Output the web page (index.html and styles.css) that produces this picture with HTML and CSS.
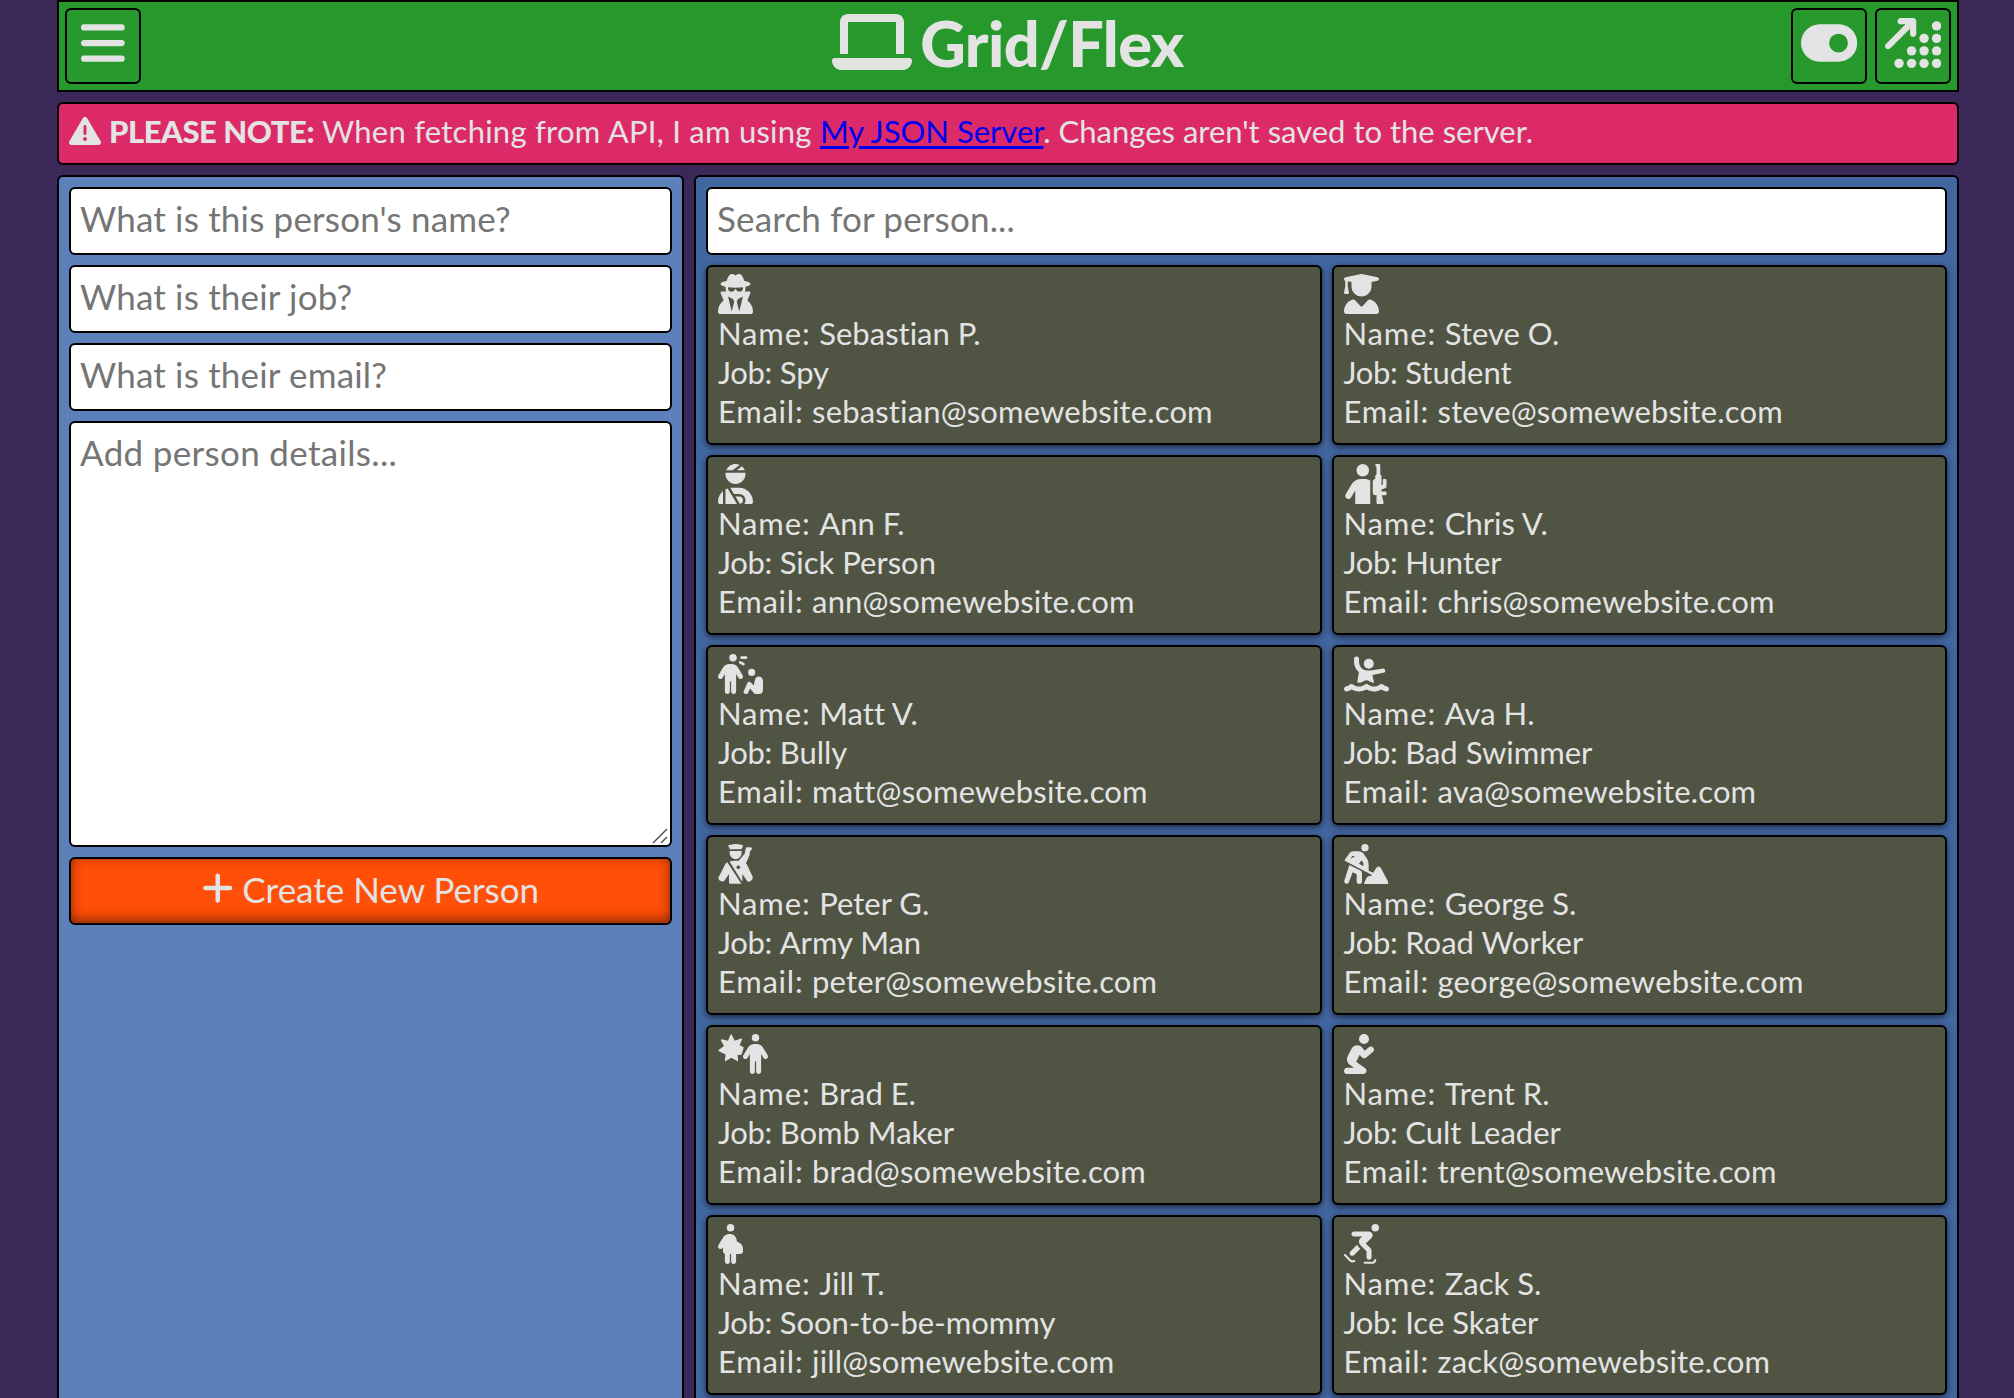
FILE: index.html
```html
<!DOCTYPE html>
<html lang="en">
<head>
<meta charset="utf-8">
<title>Grid/Flex</title>
<link rel="stylesheet" href="styles.css">
</head>
<body>
<div class="page">
  <header class="topbar">
    <button class="square" aria-label="Menu"><svg class="icon-lg" viewBox="0 0 448 512"><path d="M32 224H416a32 32 0 0 1 0 64H32a32 32 0 0 1 0-64zM32 384H416a32 32 0 0 1 0 64H32a32 32 0 0 1 0-64zM32 64H416a32 32 0 0 1 0 64H32a32 32 0 0 1 0-64z"/></svg></button>
    <h1 class="title"><svg class="icon-xl" viewBox="0 0 640 512"><path d="M128 32C92.7 32 64 60.7 64 96V352h64V96H512V352h64V96c0-35.3-28.7-64-64-64H128zM19.2 384C8.6 384 0 392.6 0 403.2C0 445.6 34.4 480 76.8 480H563.2c42.4 0 76.8-34.4 76.8-76.8c0-10.6-8.6-19.2-19.2-19.2H19.2z"/></svg><span>Grid/Flex</span></h1>
    <div class="actions">
      <button class="square" aria-label="Toggle theme"><svg class="icon-lg" viewBox="0 0 576 512"><path d="M192 64C86 64 0 150 0 256S86 448 192 448H384c106 0 192-86 192-192s-86-192-192-192H192zm192 96a96 96 0 1 1 0 192 96 96 0 1 1 0-192z"/></svg></button>
      <button class="square" aria-label="Sort"><svg class="icon-lg" viewBox="0 0 576 512"><path d="M160 0c-17.7 0-32 14.3-32 32s14.3 32 32 32h50.7L9.4 265.4c-12.5 12.5-12.5 32.8 0 45.3s32.8 12.5 45.3 0L256 109.3V160c0 17.7 14.3 32 32 32s32-14.3 32-32V32c0-17.7-14.3-32-32-32H160z"/><circle cx="528" cy="80" r="48"/><circle cx="400" cy="208" r="48"/><circle cx="528" cy="208" r="48"/><circle cx="272" cy="336" r="48"/><circle cx="400" cy="336" r="48"/><circle cx="528" cy="336" r="48"/><circle cx="144" cy="464" r="48"/><circle cx="272" cy="464" r="48"/><circle cx="400" cy="464" r="48"/><circle cx="528" cy="464" r="48"/></svg></button>
    </div>
  </header>

  <p class="notice"><svg class="icon-sm" viewBox="0 0 512 512"><path d="M256 32c14.2 0 27.3 7.5 34.5 19.8l216 368c7.3 12.4 7.3 27.7 .2 40.1S486.3 480 472 480H40c-14.3 0-27.6-7.7-34.7-20.1s-7-27.8 .2-40.1l216-368C228.7 39.5 241.8 32 256 32zm0 128c-13.3 0-24 10.7-24 24V296c0 13.3 10.7 24 24 24s24-10.7 24-24V184c0-13.3-10.7-24-24-24zm32 224a32 32 0 1 0 -64 0 32 32 0 1 0 64 0z"/></svg><strong>PLEASE NOTE:</strong><span><span class="wide">When fetching from API, I am using </span><a href="#">My JSON Server</a>. Changes aren't saved to the server.</span></p>

  <main class="columns">
    <form class="panel form">
      <input class="field" type="text" placeholder="What is this person's name?">
      <input class="field" type="text" placeholder="What is their job?">
      <input class="field" type="text" placeholder="What is their email?">
      <div class="details-wrap">
        <textarea class="field details" placeholder="Add person details..."></textarea>
        <svg class="grip" viewBox="0 0 16 16"><path d="M1 15L15 1M9 15L15 9"/></svg>
      </div>
      <button class="create" type="button"><svg class="icon-md" viewBox="0 0 448 512"><path d="M256 80c0-17.7-14.3-32-32-32s-32 14.3-32 32V224H48c-17.7 0-32 14.3-32 32s14.3 32 32 32H192V432c0 17.7 14.3 32 32 32s32-14.3 32-32V288H400c17.7 0 32-14.3 32-32s-14.3-32-32-32H256V80z"/></svg><span>Create New Person</span></button>
    </form>

    <section class="panel people">
      <input class="field search" type="text" placeholder="Search for person...">
      <div class="cards">
        <article class="card">
          <svg viewBox="0 0 448 512"><path d="M224 16c-6.7 0-10.8-2.8-15.5-6.1C201.9 5.4 194 0 176 0c-30.5 0-52 43.7-66 89.4C62.7 98.1 32 112.2 32 128c0 14.3 25 27.1 64.6 35.9c-.4 4-.6 8-.6 12.1c0 17 3.3 33.2 9.3 48H45.4C38 224 32 230 32 237.4c0 1.7 .3 3.4 1 5l38.8 96.9C28.2 371.8 0 423.8 0 482.3C0 498.7 13.3 512 29.7 512H418.3c16.4 0 29.7-13.3 29.7-29.7c0-58.5-28.2-110.4-71.7-143L415 242.4c.6-1.6 1-3.3 1-5c0-7.4-6-13.4-13.4-13.4H342.7c6-14.8 9.3-31 9.3-48c0-4.1-.2-8.1-.6-12.1C391 155.1 416 142.3 416 128c0-15.8-30.7-29.9-78-38.6C324 43.7 302.5 0 272 0c-18 0-25.9 5.4-32.5 9.9c-4.8 3.3-8.8 6.1-15.5 6.1zm56 208H267.6c-16.5 0-31.1-10.6-36.3-26.2c-2.3-7-12.2-7-14.5 0c-5.2 15.6-19.9 26.2-36.3 26.2H168c-22.1 0-40-17.9-40-40V169.6c28.2 4.1 61 6.4 96 6.4s67.8-2.3 96-6.4V184c0 22.1-17.9 40-40 40zm-88 96l16 32L176 480 128 288l64 32zm128-32L272 480 240 352l16-32 64-32z"/></svg>
          <p><span class="key-name">Name: </span>Sebastian P.</p><p><span class="key-job">Job: </span>Spy</p><p class="email"><span class="key-email">Email: </span>sebastian@somewebsite.com</p>
        </article>
        <article class="card">
          <svg viewBox="0 0 448 512"><path d="M219.3 .5c3.1-.6 6.3-.6 9.4 0l200 40C439.9 42.7 448 52.6 448 64s-8.1 21.3-19.3 23.5L352 102.9V160c0 70.7-57.3 128-128 128s-128-57.3-128-128V102.9L48 93.3v65.1l15.7 78.4c.9 4.7-.3 9.6-3.3 13.3s-7.6 5.9-12.4 5.9H16c-4.8 0-9.3-2.1-12.4-5.9s-4.3-8.6-3.3-13.3L16 158.4V86.6C6.5 83.3 0 74.3 0 64C0 52.6 8.1 42.7 19.3 40.5l200-40zM111.9 327.7c10.5-3.4 21.8 .4 29.4 8.5l71 75.5c6.3 6.7 17 6.7 23.3 0l71-75.5c7.6-8.1 18.9-11.9 29.4-8.5C401 348.6 448 409.4 448 481.3c0 17-13.8 30.7-30.7 30.7H30.7C13.8 512 0 498.2 0 481.3c0-71.9 47-132.7 111.9-153.6z"/></svg>
          <p><span class="key-name">Name: </span>Steve O.</p><p><span class="key-job">Job: </span>Student</p><p class="email"><span class="key-email">Email: </span>steve@somewebsite.com</p>
        </article>
        <article class="card">
          <svg viewBox="0 0 448 512"><path d="M240 80H342.7c-7.9-19.5-20.4-36.5-36.2-49.9L240 80zm37.7-68.2C261.3 4.2 243.2 0 224 0c-53.7 0-99.7 33.1-118.7 80h81.4l91-68.2zM224 256c70.7 0 128-57.3 128-128c0-5.4-.3-10.8-1-16H97c-.7 5.2-1 10.6-1 16c0 70.7 57.3 128 128 128zM124 312.4c-9.7 3.1-19.1 7-28 11.7V512H243.7L181.5 408.1 124 312.4zm33-7.2L204.3 384H272c44.2 0 80 35.8 80 80c0 18-6 34.6-16 48h82.3c16.4 0 29.7-13.3 29.7-29.7C448 383.8 368.2 304 269.7 304H178.3c-7.2 0-14.3 .4-21.3 1.3zM0 482.3C0 498.7 13.3 512 29.7 512H64V345.4C24.9 378.1 0 427.3 0 482.3zM320 464c0-26.5-21.5-48-48-48H223.5l57.1 95.2C303 507.2 320 487.6 320 464z"/></svg>
          <p><span class="key-name">Name: </span>Ann F.</p><p><span class="key-job">Job: </span>Sick Person</p><p class="email"><span class="key-email">Email: </span>ann@somewebsite.com</p>
        </article>
        <article class="card">
          <svg viewBox="0 0 576 512"><path d="M265.2 192c25.4 0 49.8 7.1 70.8 19.9V512H144V337.7L90.4 428.3c-11.2 19-35.8 25.3-54.8 14.1s-25.3-35.8-14.1-54.8L97.7 258.8c24.5-41.4 69-66.8 117.1-66.8h50.4zM160 80a80 80 0 1 1 160 0A80 80 0 1 1 160 80zM448 0c8.8 0 16 7.2 16 16V132.3c9.6 5.5 16 15.9 16 27.7V269.3l16-5.3V208c0-8.8 7.2-16 16-16h16c8.8 0 16 7.2 16 16v84.500c0 6.9-4.4 13-10.9 15.2L480 325.3V352h48c8.8 0 16 7.2 16 16v16c0 8.8-7.2 16-16 16H484l23 92.1c2.5 10.1-5.1 19.9-15.5 19.9H432c-8.8 0-16-7.2-16-16V400H400c-17.7 0-32-14.3-32-32V224c0-17.7 14.3-32 32-32V160c0-11.8 6.400-22.2 16-27.7V32c-8.8 0-16-7.2-16-16s7.2-16 16-16h32z"/></svg>
          <p><span class="key-name">Name: </span>Chris V.</p><p><span class="key-job">Job: </span>Hunter</p><p class="email"><span class="key-email">Email: </span>chris@somewebsite.com</p>
        </article>
        <article class="card">
          <svg viewBox="0 0 576 512"><circle cx="192" cy="48" r="48"/><path d="M152 352V480c0 17.7-14.3 32-32 32s-32-14.3-32-32V256.9L59.4 304.5c-9.1 15.1-28.8 20-43.9 10.900s-20-28.8-10.9-43.9l58.3-97c17.4-28.9 48.6-46.6 82.3-46.6h29.7c33.700 0 64.9 17.700 82.300 46.600l58.300 97c9.100 15.100 4.200 34.800-10.900 43.900s-34.800 4.200-43.900-10.900L232 256.900V480c0 17.700-14.300 32-32 32s-32-14.300-32-32V352H152z"/><circle cx="431" cy="236" r="46"/><g class="line"><path stroke-width="34" d="M302 47H358M284 106L326 130"/><path stroke-width="60" d="M358 482L402 388L470 462"/></g><path d="M396 368L456 404C470 380 460 290 520 288C552 288 576 312 576 346V460C576 490 554 512 526 512H470L430 460Z"/></svg>
          <p><span class="key-name">Name: </span>Matt V.</p><p><span class="key-job">Job: </span>Bully</p><p class="email"><span class="key-email">Email: </span>matt@somewebsite.com</p>
        </article>
        <article class="card">
          <svg viewBox="0 0 576 512"><circle cx="317" cy="124" r="64"/><path d="M192 64a32 32 0 0 0-64 0V96C128 150 151 200 190 234L169 362C178 366 184 368 192 368C213 368 234 359 251 348C273 332 303 332 325 348C342 359 363 368 384 368L364 268L518 238A32 32 0 0 0 506 184L362 208C330 214 310 210 280 208C228 202 192 150 192 96Z"/><path transform="translate(0-32)" d="M269.500 421.900c11.100-7.900 25.900-7.900 37 0C329 437.400 356.500 448 384 448c26.900 0 55.300-10.800 77.400-26.100c11.900-8.500 28.100-7.800 39.200 1.700c14.400 11.900 32.500 21 50.600 25.200c17.200 4 27.900 21.200 23.900 38.400s-21.200 27.900-38.400 23.900c-24.500-5.700-44.900-16.500-58.200-25C449.500 501.700 417 512 384 512c-31.900 0-60.600-9.900-80.400-18.900c-5.800-2.700-11.100-5.300-15.600-7.700c-4.500 2.400-9.700 5.100-15.600 7.700c-19.800 9-48.500 18.900-80.400 18.900c-33 0-65.500-10.300-94.500-25.800c-13.400 8.400-33.700 19.300-58.200 25c-17.200 4-34.400-6.700-38.400-23.900s6.700-34.400 23.900-38.400c18.100-4.200 36.200-13.300 50.600-25.200c11.100-9.400 27.300-10.100 39.200-1.700C136.700 437.200 165.100 448 192 448c27.500 0 55-10.600 77.500-26.100z"/></svg>
          <p><span class="key-name">Name: </span>Ava H.</p><p><span class="key-job">Job: </span>Bad Swimmer</p><p class="email"><span class="key-email">Email: </span>ava@somewebsite.com</p>
        </article>
        <article class="card">
          <svg viewBox="0 0 105 120"><path d="M31 6Q30 4 33 3L50 0H56L73 3Q76 4 75 6L71 14V16H35V14ZM35 21H71V26C71 37 63 45 53 45S35 37 35 26ZM28 55L70 119H36Q33 119 33 116V90L19 110Q15 114 8 111T1 101L19 66Q22 58 28 55ZM36 52Q42 50 50 50H62L80 29L84 10L87 11L90 8L94 11L97 9L103 13L95 24V32L91 41L84 58Q87 61 89 66L104 98Q106 106 98 111T87 110L73 90V112L71 111L36 55Z"/><circle class="hole" cx="61" cy="70" r="5.500"/></svg>
          <p><span class="key-name">Name: </span>Peter G.</p><p><span class="key-job">Job: </span>Army Man</p><p class="email"><span class="key-email">Email: </span>peter@somewebsite.com</p>
        </article>
        <article class="card">
          <svg viewBox="0 0 134 120"><circle cx="63" cy="11" r="11"/><path fill-rule="evenodd" d="M2 48L15 29Q20 22 29 22H42Q54 22 61 32L70 46Q74 54 74 62V80L88 86L96 73Q104 62 111 73L133 114Q136 120 130 120H64Q58 120 62 113L68 101Q71 96 77 96H81L84 93L5 52Q1 50 2 48ZM20 45L33 36L26 36Q24 37 22 41ZM45 59L58 66V57L53 49Z"/><path d="M16 63L51 80Q54 82 54 87V112A7 7 0 0 1 38 112V91L26 85L15 114A7 7 0 0 1 1 110Z"/></svg>
          <p><span class="key-name">Name: </span>George S.</p><p><span class="key-job">Job: </span>Road Worker</p><p class="email"><span class="key-email">Email: </span>george@somewebsite.com</p>
        </article>
        <article class="card">
          <svg viewBox="0 0 640 512"><path transform="translate(320)" d="M112 48a48 48 0 1 1 96 0A48 48 0 1 1 112 48zm40 304V480c0 17.700-14.300 32-32 32s-32-14.300-32-32V256.900L59.400 304.500c-9.100 15.100-28.800 20-43.900 10.900s-20-28.800-10.900-43.900l58.300-97c17.400-28.900 48.600-46.600 82.300-46.600h29.700c33.700 0 64.900 17.700 82.300 46.600l58.300 97c9.100 15.100 4.200 34.800-10.900 43.900s-34.800 4.200-43.900-10.900L232 256.900V480c0 17.700-14.300 32-32 32s-32-14.300-32-32V352H152z"/><path d="M176 8L214 87L296 58Q312 56 306 72L278 140L330 174L300 266L250 270L258 340Q258 352 246 346L171 303L100 346Q86 352 88 338L98 262L12 220Q-2 210 12 202L76 154L38 82Q34 66 50 68L128 86L160 8Q168 0 176 8Z"/></svg>
          <p><span class="key-name">Name: </span>Brad E.</p><p><span class="key-job">Job: </span>Bomb Maker</p><p class="email"><span class="key-email">Email: </span>brad@somewebsite.com</p>
        </article>
        <article class="card">
          <svg viewBox="32 0 448 512"><path d="M352 64A64 64 0 1 0 224 64a64 64 0 1 0 128 0zM232.700 264l22.900 31.500c6.500 8.900 16.300 14.700 27.200 16.100s21.900-1.700 30.400-8.700l88-72c17.100-14 19.600-39.200 5.600-56.300s-39.200-19.600-56.300-5.600l-55.200 45.200-26.200-36C253.600 156.700 228.600 144 202 144c-30.900 0-59.200 17.100-73.600 44.400L79.800 280.900c-20.200 38.500-9.400 85.900 25.600 111.800L158.600 432H72c-22.100 0-40 17.900-40 40s17.900 40 40 40H280c17.300 0 32.600-11.100 38-27.500s-.3-34.400-14.200-44.700L187.700 354l45-90z"/></svg>
          <p><span class="key-name">Name: </span>Trent R.</p><p><span class="key-job">Job: </span>Cult Leader</p><p class="email"><span class="key-email">Email: </span>trent@somewebsite.com</p>
        </article>
        <article class="card">
          <svg viewBox="32 0 384 512"><circle cx="192" cy="48" r="48"/><path d="M120 383c-13.800-3.600-24-16.100-24-31V296.900l-4.600 7.600c-9.100 15.100-28.800 20-43.900 10.900s-20-28.800-10.900-43.900l58.300-97c15-24.900 40.300-41.500 68.700-45.600c4.100-.6 8.200-1 12.500-1h15.900c1.400 0 2.800 .1 4.100 .3c35.700 2.900 65.400 29.300 72.100 65l6.100 32.500c44.300 8.600 77.700 47.500 77.700 94.300v32c0 17.700-14.300 32-32 32H264v96c0 17.700-14.300 32-32 32s-32-14.300-32-32V384h-16v96c0 17.700-14.300 32-32 32s-32-14.300-32-32V383z"/></svg>
          <p><span class="key-name">Name: </span>Jill T.</p><p><span class="key-job">Job: </span>Soon-to-be-mommy</p><p class="email"><span class="key-email">Email: </span>jill@somewebsite.com</p>
        </article>
        <article class="card">
          <svg viewBox="0 0 448 512"><circle cx="400" cy="48" r="48"/><path d="M96 128c0-17.700 14.300-32 32-32H319.400c43.600 0 64.600 53.400 32.800 83.100l-74 69.300 60.200 60.200c9 9 14.100 21.200 14.100 33.900V424c0 17.700-14.300 32-32 32s-32-14.300-32-32V349.300l-77.900-77.800c-26.600-26.600-24.600-70.300 4.300-94.400l20.400-17H128c-17.700 0-32-14.300-32-32zM81.400 353.400l86.900-86.900c4.600 10 11 19.300 19.300 27.500l21.800 21.800-82.700 82.700c-12.500 12.500-32.800 12.500-45.300 0s-12.500-32.800 0-45.300z"/><path class="line" stroke-width="26" d="M12 396L76 464Q94 486 132 474M264 497H366Q396 494 400 462"/></svg>
          <p><span class="key-name">Name: </span>Zack S.</p><p><span class="key-job">Job: </span>Ice Skater</p><p class="email"><span class="key-email">Email: </span>zack@somewebsite.com</p>
        </article>
      </div>
    </section>
  </main>
</div>
</body>
</html>
```
FILE: styles.css
```css
* { box-sizing: border-box; margin: 0; }

html { height: 1398px; overflow: hidden; }

body {
  height: 1398px;
  overflow: hidden;
  background: #3b2858;
  color: #e3e3e3;
  font-family: Optima, Lato, sans-serif;
  font-size: 31px;
  font-variant-ligatures: none;
}

svg { fill: currentColor; display: block; flex: none; }

.page {
  width: 1902px;
  height: 1398px;
  margin-left: 57px;
  overflow: hidden;
  display: flex;
  flex-direction: column;
  gap: 10px;
}

.topbar {
  height: 92px;
  flex: none;
  padding: 6px;
  border: 2px solid #000;
  background: #27982c;
  display: grid;
  grid-template-columns: 1fr auto 1fr;
}

.square {
  width: 76px;
  height: 76px;
  padding: 0 0 6px;
  border: 2px solid #000;
  border-radius: 6px;
  background: none;
  color: inherit;
  display: flex;
  align-items: center;
  justify-content: center;
}

.icon-lg { height: 50px; }
.icon-xl { height: 64px; }
.icon-md { height: 36px; margin-bottom: 2px; }
.icon-sm { height: 32px; }

.title {
  display: flex;
  align-items: flex-start;
  gap: 8px;
  padding-top: 2px;
  font-size: 63px;
  font-weight: 900;
  line-height: 66px;
  letter-spacing: -.6px;
}

.actions { display: flex; justify-content: flex-end; gap: 8px; }

.notice {
  height: 63px;
  flex: none;
  padding: 0 10px 5px;
  border: 2px solid #000;
  border-radius: 6px;
  background: #dc2a69;
  display: flex;
  align-items: center;
  gap: 8px;
  white-space: nowrap;
}

.notice strong { font-weight: 900; letter-spacing: -.45px; }
.notice .wide { letter-spacing: .25px; }
.notice a { color: #00e; text-underline-offset: 3px; text-decoration-thickness: 3px; }

.columns {
  flex: 1;
  min-height: 0;
  display: grid;
  grid-template-columns: 627px 1265px;
  grid-template-rows: 100%;
  gap: 10px;
}

.panel {
  padding: 10px 10px 0;
  border: 2px solid #000;
  border-bottom: 0;
  border-radius: 6px 6px 0 0;
  display: flex;
  flex-direction: column;
  gap: 10px;
}

.form { background: #5c80ba; }
.people { background: #4266a0; }

.field {
  width: 100%;
  height: 68px;
  flex: none;
  padding: 0 9px 6px;
  border: 2px solid #000;
  border-radius: 6px;
  background: #fff;
  font: inherit;
  font-size: 35px;
  letter-spacing: .17px;
}

.field::placeholder { color: #757575; }
.details-wrap { position: relative; height: 426px; flex: none; }
.details { display: block; height: 426px; padding-top: 8px; resize: none; letter-spacing: .33px; }

.grip {
  position: absolute;
  right: 4px;
  bottom: 3px;
  width: 16px;
  height: 16px;
  fill: none;
  stroke: #555;
  stroke-width: 1.5;
}

.create {
  height: 68px;
  flex: none;
  padding: 0 0 4px;
  border: 2px solid #000;
  border-radius: 6px;
  background: #ff4f08;
  box-shadow: inset 0 -3px 12px rgba(0, 0, 0, .5);
  color: inherit;
  font: inherit;
  font-size: 35px;
  display: flex;
  align-items: center;
  justify-content: center;
  gap: 9px;
}

.cards {
  display: grid;
  grid-template-columns: 1fr 1fr;
  gap: 10px;
}

.card {
  height: 180px;
  padding: 7px 10px;
  border: 2px solid #000;
  border-radius: 6px;
  background: #505443;
  box-shadow: 0 2px 6px rgba(0, 0, 0, .6);
  line-height: 39px;
  white-space: nowrap;
}

.card svg { height: 40px; }
.card .email { letter-spacing: .15px; }
.key-name { letter-spacing: .85px; }
.key-job { letter-spacing: -.3px; }
.key-email { letter-spacing: .75px; }
.line { fill: none; stroke: currentColor; stroke-linecap: round; stroke-linejoin: round; }
.hole { fill: #505443; }
```
